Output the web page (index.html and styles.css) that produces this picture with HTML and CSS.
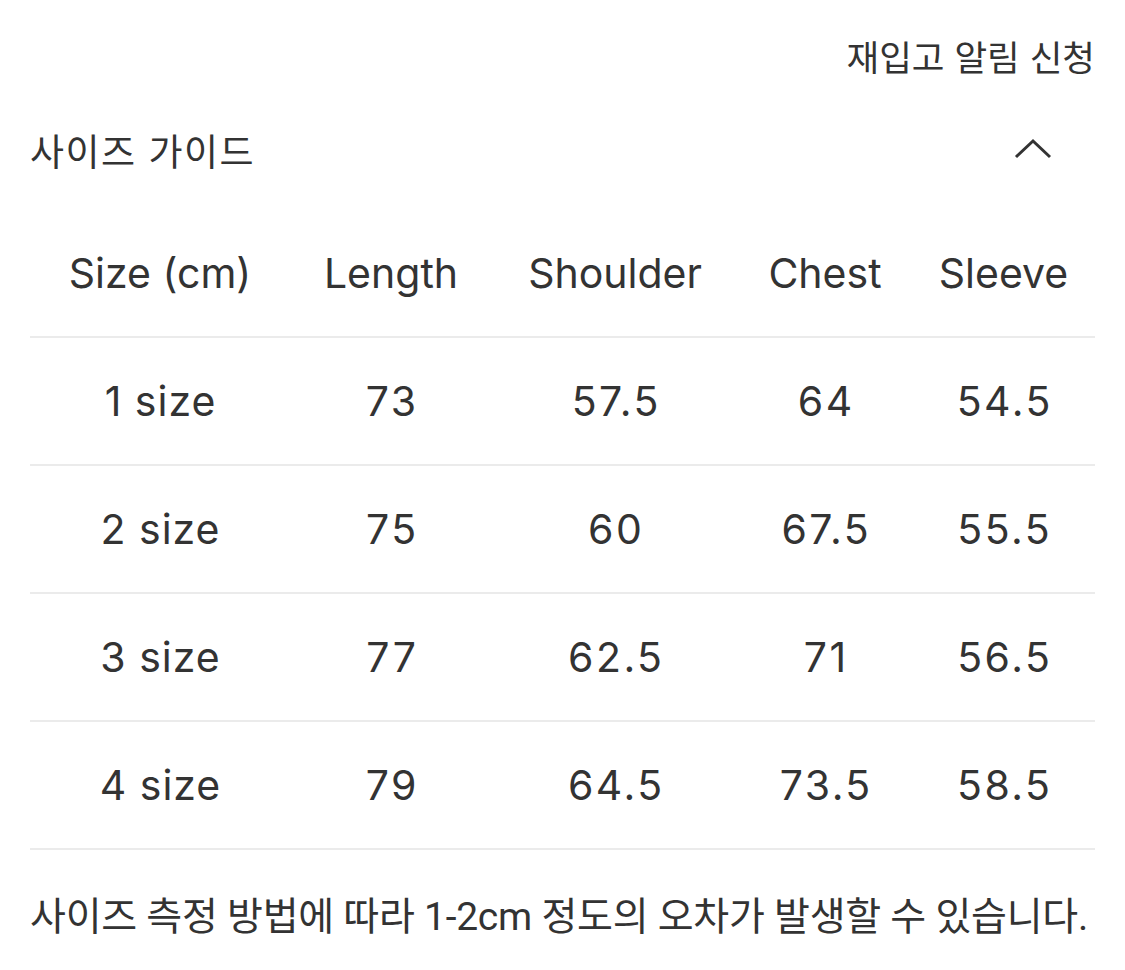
FILE: index.html
```html
<!DOCTYPE html>
<html lang="ko">
<head>
<meta charset="utf-8">
<link rel="stylesheet" href="styles.css">
</head>
<body>
<div class="page">
  <div class="restock"><span>재입고 알림 신청</span></div>
  <div class="acc-head">
    <span class="acc-title">사이즈 가이드</span>
    <svg class="chev" width="40" height="24" viewBox="0 0 40 24"><path d="M3 20 L20 4 L37 20" fill="none" stroke="#333" stroke-width="3"/></svg>
  </div>
  <div class="table">
    <div class="row head">
      <div class="c">Size (cm)</div><div class="c">Length</div><div class="c">Shoulder</div><div class="c">Chest</div><div class="c">Sleeve</div>
    </div>
    <div class="row">
      <div class="c sz">1 size</div><div class="c n">73</div><div class="c n">57.5</div><div class="c n">64</div><div class="c n">54.5</div>
    </div>
    <div class="row">
      <div class="c sz">2 size</div><div class="c n">75</div><div class="c n">60</div><div class="c n">67.5</div><div class="c n">55.5</div>
    </div>
    <div class="row">
      <div class="c sz">3 size</div><div class="c n">77</div><div class="c n">62.5</div><div class="c n">71</div><div class="c n">56.5</div>
    </div>
    <div class="row">
      <div class="c sz">4 size</div><div class="c n">79</div><div class="c n">64.5</div><div class="c n">73.5</div><div class="c n">58.5</div>
    </div>
  </div>
  <p class="note">사이즈 측정 방법에 따라 1-2cm 정도의 오차가 발생할 수 있습니다.</p>
</div>
</body>
</html>
```
FILE: styles.css
```css
html, body {
  margin: 0;
  padding: 0;
  background: #fff;
}
body {
  font-family: Inter, "Noto Sans CJK KR", sans-serif;
  color: #333;
}
.page {
  width: 1065px;
  padding: 0 30px;
}
.restock {
  height: 90px;
  padding-top: 10px;
  display: flex;
  align-items: center;
  justify-content: flex-end;
  font-size: 35.5px;
  font-family: "Noto Sans CJK KR", sans-serif;
}
.acc-head {
  height: 100px;
  display: flex;
  align-items: center;
  justify-content: space-between;
  font-family: "Noto Sans CJK KR", sans-serif;
  font-size: 37px;
  letter-spacing: 1.5px;
}
.chev {
  margin-right: 42px;
  margin-top: -2px;
}
.table {
  margin-top: 10px;
}
.row {
  display: grid;
  grid-template-columns: 260px 202px 246px 174px 183px;
  height: 126px;
  border-bottom: 2px solid #ebebeb;
  align-items: center;
  font-size: 41px;
}
.c {
  text-align: center;
}
.c.n {
  letter-spacing: 2.5px;
  text-indent: 2.5px;
}
.c.sz {
  letter-spacing: 1px;
  text-indent: 1px;
}
.note {
  margin: 0;
  height: 126px;
  display: flex;
  align-items: center;
  font-family: Roboto, "Noto Sans CJK KR", sans-serif;
  font-size: 39px;
  letter-spacing: -0.25px;
  white-space: nowrap;
}
```
